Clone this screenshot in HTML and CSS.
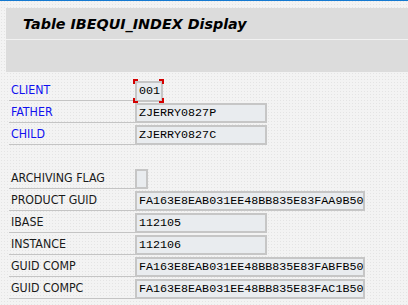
FILE: index.html
```html
<!DOCTYPE html>
<html>
<head>
<meta charset="utf-8">
<link rel="stylesheet" href="styles.css">
</head>
<body>
<div class="topline"></div>
<div class="panel">
  <div class="titlebar"><h1 class="title">Table IBEQUI_INDEX Display</h1></div>
  <div class="toolbar"></div>
</div>
<div class="form">
  <div class="row">
    <div class="label key">CLIENT</div>
    <div class="focus"><div class="field w-client">001</div></div>
  </div>
  <div class="row">
    <div class="label key">FATHER</div>
    <div class="field w-mid">ZJERRY0827P</div>
  </div>
  <div class="row">
    <div class="label key">CHILD</div>
    <div class="field w-mid">ZJERRY0827C</div>
  </div>
  <div class="row blank"></div>
  <div class="row">
    <div class="label">ARCHIVING FLAG</div>
    <div class="field w-check"></div>
  </div>
  <div class="row">
    <div class="label">PRODUCT GUID</div>
    <div class="field w-long">FA163E8EAB031EE48BB835E83FAA9B50</div>
  </div>
  <div class="row">
    <div class="label">IBASE</div>
    <div class="field w-mid">112105</div>
  </div>
  <div class="row">
    <div class="label">INSTANCE</div>
    <div class="field w-mid">112106</div>
  </div>
  <div class="row">
    <div class="label">GUID COMP</div>
    <div class="field w-long">FA163E8EAB031EE48BB835E83FABFB50</div>
  </div>
  <div class="row">
    <div class="label">GUID COMPC</div>
    <div class="field w-long">FA163E8EAB031EE48BB835E83FAC1B50</div>
  </div>
</div>
</body>
</html>
```
FILE: styles.css
```css
html, body {
  margin: 0;
  padding: 0;
}
body {
  width: 408px;
  height: 305px;
  overflow: hidden;
  background-color: #f3f3f3;
  background-image: radial-gradient(circle, #e4e4e4 0.7px, transparent 0.9px);
  background-size: 3px 3px;
  font-family: "DejaVu Sans", sans-serif;
}
.topline {
  height: 1px;
  background: #1479d0;
}
.panel {
  margin: 7px 0 0 6px;
}
.titlebar {
  height: 31px;
  background: #dcdcdc;
  border-bottom: 1px solid #f2f2f2;
  display: flex;
  align-items: center;
}
.title {
  margin: 0 0 0 17px;
  font-family: "DejaVu Sans", sans-serif;
  font-weight: bold;
  font-style: italic;
  font-size: 14.3px;
  color: #000;
}
.toolbar {
  height: 32px;
  background: #dcdcdc;
}
.form {
  margin-top: 8px;
  padding-left: 9px;
}
.row {
  display: flex;
  height: 22px;
  align-items: flex-start;
}
.label {
  width: 124px;
  height: 20px;
  line-height: 21px;
  padding-left: 2px;
  border-bottom: 1px solid #c4c4c4;
  font-family: "DejaVu Sans Condensed", "DejaVu Sans", sans-serif;
  font-stretch: condensed;
  font-size: 12.3px;
  color: #1a1a1a;
  white-space: nowrap;
}
.label.key {
  color: #1010f0;
}
.field {
  box-sizing: border-box;
  height: 20px;
  margin-top: 1px;
  border: 2px solid #c6c6c6;
  background: #e9ecef;
  padding-left: 2px;
  font-family: "Liberation Mono", monospace;
  font-size: 11.7px;
  line-height: 16px;
  color: #000;
  white-space: nowrap;
}
.w-client { width: 28px; height: 21px; line-height: 17px; }
.w-mid { width: 132px; }
.w-long { width: 230px; }
.w-check { width: 13px; padding: 0; }
.focus {
  position: relative;
}
.focus::after {
  content: "";
  position: absolute;
  left: -2px;
  right: -1px;
  top: -1px;
  bottom: -1px;
  pointer-events: none;
  background:
    linear-gradient(#d40000, #d40000) left top / 5px 2px no-repeat,
    linear-gradient(#d40000, #d40000) left top / 2px 5px no-repeat,
    linear-gradient(#d40000, #d40000) right top / 5px 2px no-repeat,
    linear-gradient(#d40000, #d40000) right top / 2px 5px no-repeat,
    linear-gradient(#d40000, #d40000) left bottom / 5px 2px no-repeat,
    linear-gradient(#d40000, #d40000) left bottom / 2px 5px no-repeat,
    linear-gradient(#d40000, #d40000) right bottom / 5px 2px no-repeat,
    linear-gradient(#d40000, #d40000) right bottom / 2px 5px no-repeat;
}
```
